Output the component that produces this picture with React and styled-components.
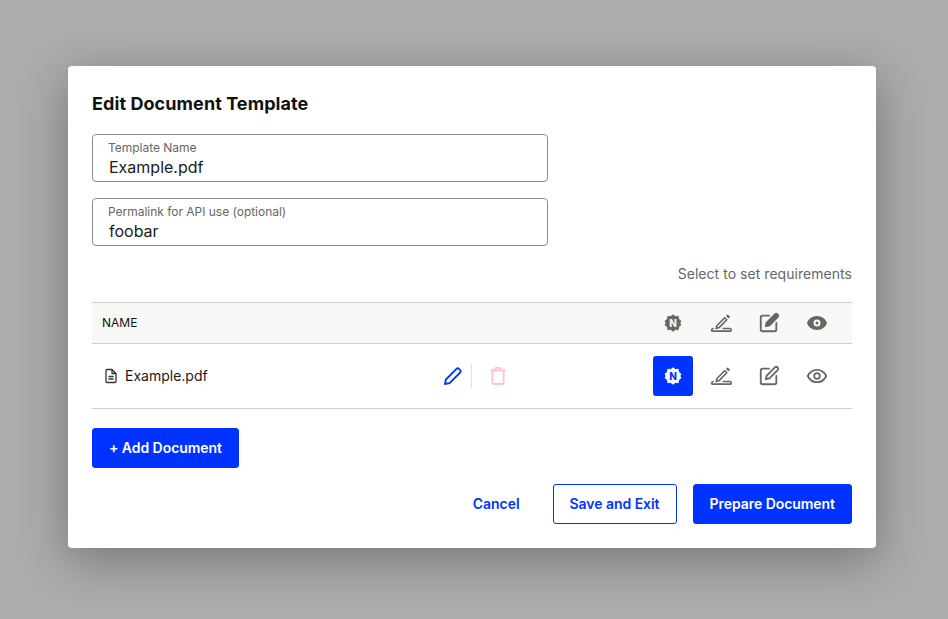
import styled, { createGlobalStyle } from "styled-components";

const Global = createGlobalStyle`
  html, body {
    margin: 0;
    padding: 0;
    background: #acacac;
    font-family: Inter, "Liberation Sans", sans-serif;
  }
`;

const BLUE = "#0033ff";
const GREY = "#666663";

const Overlay = styled.div`
  width: 948px;
  height: 619px;
  box-sizing: border-box;
  padding: 66px 0 0 68px;
  overflow: hidden;
  background: #acacac;
`;

const Modal = styled.div`
  width: 808px;
  height: 482px;
  box-sizing: border-box;
  padding: 28px 24px 24px;
  background: #fff;
  border-radius: 4px;
  box-shadow: 0 12px 48px rgba(0, 0, 0, 0.32);
  display: flex;
  flex-direction: column;
`;

const Title = styled.h2`
  margin: 0 0 20px;
  font-size: 18px;
  line-height: 20px;
  font-weight: 700;
  letter-spacing: 0.08px;
  color: #111;
`;

const Fields = styled.div`
  display: flex;
  flex-direction: column;
  gap: 16px;
`;

const Field = styled.div`
  width: 456px;
  height: 48px;
  box-sizing: border-box;
  padding: 6px 15px;
  border: 1px solid #8c8c88;
  border-radius: 4px;
  display: flex;
  flex-direction: column;
`;

const FieldLabel = styled.span`
  font-size: 12px;
  line-height: 14px;
  letter-spacing: -0.02px;
  color: #666;
`;

const FieldValue = styled.span`
  margin-top: 2px;
  padding-left: 1px;
  font-size: 16px;
  line-height: 20px;
  color: #1a1a1a;
`;

const Hint = styled.div`
  margin-top: 19px;
  text-align: right;
  font-size: 14px;
  line-height: 18px;
  letter-spacing: 0.04px;
  color: #666;
`;

const Row = styled.div`
  display: flex;
  align-items: center;
  padding: 0 15px 0 10px;
  border-bottom: 1px solid #d0d0ca;
`;

const HeadRow = styled(Row)`
  margin-top: 19px;
  height: 42px;
  box-sizing: border-box;
  background: #f8f8f6;
  border-top: 1px solid #d0d0ca;
  font-size: 12px;
  color: #111;
`;

const HeadLabel = styled.span`
  margin-bottom: 1px;
`;

const BodyRow = styled(Row)`
  height: 65px;
  box-sizing: border-box;
  font-size: 14px;
  color: #1a1a1a;
`;

const Name = styled.div`
  width: 336px;
  display: flex;
  align-items: center;
  gap: 6px;
  padding-left: 1px;
`;

const NameText = styled.span`
  margin-bottom: 1px;
`;

const Actions = styled.div`
  display: flex;
  align-items: center;
`;

const ActionSlot = styled.div`
  width: 28px;
  height: 24px;
  display: flex;
  align-items: center;
  justify-content: center;
`;

const Divider = styled.div`
  width: 1px;
  height: 24px;
  margin: 0 12px 0 4px;
  background: #d9e3e8;
`;

const Columns = styled.div`
  margin-left: auto;
  display: flex;
  gap: 8px;
`;

const Col = styled.div`
  width: 40px;
  height: 40px;
  display: flex;
  align-items: center;
  justify-content: center;
  border-radius: 3px;
  background: ${(p) => (p.$active ? BLUE : "transparent")};
`;

const AddWrap = styled.div`
  margin-top: 19px;
`;

const Footer = styled.div`
  margin-top: 16px;
  display: flex;
  justify-content: flex-end;
  gap: 16px;
`;

const Button = styled.button`
  height: 40px;
  box-sizing: border-box;
  padding: 0 16px 2px;
  border-radius: 3px;
  border: 1px solid ${(p) => (p.$variant === "ghost" ? "transparent" : BLUE)};
  background: ${(p) => (p.$variant === "primary" ? BLUE : "#fff")};
  color: ${(p) => (p.$variant === "primary" ? "#fff" : BLUE)};
  font-family: inherit;
  font-size: 14px;
  font-weight: 600;
  letter-spacing: -0.05px;
`;

const BADGE =
  "M12 2l2.700 2.300 3.500-.4.600 3.500L21.600 9.700 20.200 12l1.400 2.300-2.800 2.300-.6 3.500-3.500-.4L12 22l-2.700-2.300-3.500.4-.6-3.500-2.800-2.300L3.800 12 2.400 9.700l2.800-2.300.6-3.500 3.500.4z";

const BadgeIcon = ({ fill, ink }) => (
  <svg width="20" height="20" viewBox="0 0 24 24">
    <path d={BADGE} fill={fill} stroke={fill} strokeWidth="1" strokeLinejoin="round" />
    <text x="12" y="16.500" textAnchor="middle" fontSize="12" fontWeight="800" fontFamily="Inter, sans-serif" fill={ink}>
      N
    </text>
  </svg>
);

const SignIcon = () => (
  <svg width="24" height="24" viewBox="0 0 24 24" fill="none" stroke={GREY} strokeWidth="1.600" strokeLinecap="round" strokeLinejoin="round">
    <path d="M8 14.500l-.9 2.900 3-.8 7.700-7.800-2.100-2.100z" />
    <path d="M18.500 4.800l1.200 1.200" strokeWidth="2.400" />
    <path d="M4 17.500c-1.700.8-2 2.600-.5 2.600h18c.9 0 .9-2.600-.3-2.600h-7" />
  </svg>
);

const EditIcon = ({ filled }) => (
  <svg width="22" height="22" viewBox="0 0 24 24" fill="none" stroke={GREY} strokeWidth="2" strokeLinecap="round" strokeLinejoin="round">
    <path d="M12 4H5a2 2 0 0 0-2 2v13a2 2 0 0 0 2 2h13a2 2 0 0 0 2-2v-7" />
    <path d="M18.400 2.600a2.100 2.100 0 0 1 3 3L12.500 14.500l-4 1 1-4z" fill={filled ? GREY : "none"} />
  </svg>
);

const EyeIcon = ({ filled }) =>
  filled ? (
    <svg width="24" height="24" viewBox="0 0 24 24">
      <path
        fill={GREY}
        fillRule="evenodd"
        d="M12 5C7 5 3.300 8.100 2 12c1.300 3.900 5 7 10 7s8.700-3.100 10-7c-1.300-3.900-5-7-10-7zm0 10.500a3.500 3.500 0 1 1 0-7 3.500 3.500 0 0 1 0 7zm0-2a1.500 1.500 0 1 0 0-3 1.500 1.500 0 0 0 0 3z"
      />
    </svg>
  ) : (
    <svg width="24" height="24" viewBox="0 0 24 24" fill="none" stroke={GREY} strokeWidth="1.800">
      <path d="M2.800 12c1.700-3.700 5.200-6.200 9.200-6.200s7.500 2.500 9.200 6.200c-1.700 3.700-5.200 6.200-9.200 6.200S4.500 15.700 2.800 12z" />
      <circle cx="12" cy="12" r="2.800" />
    </svg>
  );

const FileIcon = () => (
  <svg width="16" height="16" viewBox="0 0 16 16" fill="none" stroke="#333" strokeWidth="1.300" strokeLinejoin="round">
    <path d="M3 2.500a1 1 0 0 1 1-1h5l4 4v8a1 1 0 0 1-1 1H4a1 1 0 0 1-1-1z" />
    <path d="M9 1.500v4h4M5.500 8.500h5M5.500 11h5" />
  </svg>
);

const PencilIcon = () => (
  <svg width="20" height="20" viewBox="0 0 20 20" fill="none" stroke={BLUE} strokeWidth="1.800" strokeLinejoin="round">
    <path d="M2 18l.9-4.500L13.500 2.800a1.700 1.700 0 0 1 2.400 0l1.300 1.300a1.700 1.700 0 0 1 0 2.400L6.600 17.100z" />
  </svg>
);

const TrashIcon = () => (
  <svg width="20" height="20" viewBox="0 0 20 20" fill="none" stroke="#ffc4cb" strokeWidth="1.800" strokeLinejoin="round">
    <path d="M2.500 4.500h15M7 4.500V3a1 1 0 0 1 1-1h4a1 1 0 0 1 1 1v1.500M4.300 4.500v12a1.500 1.500 0 0 0 1.500 1.500h8.400a1.500 1.500 0 0 0 1.500-1.500v-12" />
  </svg>
);

export default function App() {
  return (
    <Overlay>
      <Global />
      <Modal>
        <Title>Edit Document Template</Title>
        <Fields>
          <Field>
            <FieldLabel>Template Name</FieldLabel>
            <FieldValue>Example.pdf</FieldValue>
          </Field>
          <Field>
            <FieldLabel>Permalink for API use (optional)</FieldLabel>
            <FieldValue>foobar</FieldValue>
          </Field>
        </Fields>
        <Hint>Select to set requirements</Hint>
        <HeadRow>
          <HeadLabel>NAME</HeadLabel>
          <Columns>
            <Col><BadgeIcon fill={GREY} ink="#f8f8f6" /></Col>
            <Col><SignIcon /></Col>
            <Col><EditIcon filled /></Col>
            <Col><EyeIcon filled /></Col>
          </Columns>
        </HeadRow>
        <BodyRow>
          <Name>
            <FileIcon />
            <NameText>Example.pdf</NameText>
          </Name>
          <Actions>
            <ActionSlot><PencilIcon /></ActionSlot>
            <Divider />
            <ActionSlot><TrashIcon /></ActionSlot>
          </Actions>
          <Columns>
            <Col $active><BadgeIcon fill="#fff" ink={BLUE} /></Col>
            <Col><SignIcon /></Col>
            <Col><EditIcon /></Col>
            <Col><EyeIcon /></Col>
          </Columns>
        </BodyRow>
        <AddWrap>
          <Button $variant="primary">+ Add Document</Button>
        </AddWrap>
        <Footer>
          <Button $variant="ghost">Cancel</Button>
          <Button>Save and Exit</Button>
          <Button $variant="primary">Prepare Document</Button>
        </Footer>
      </Modal>
    </Overlay>
  );
}
